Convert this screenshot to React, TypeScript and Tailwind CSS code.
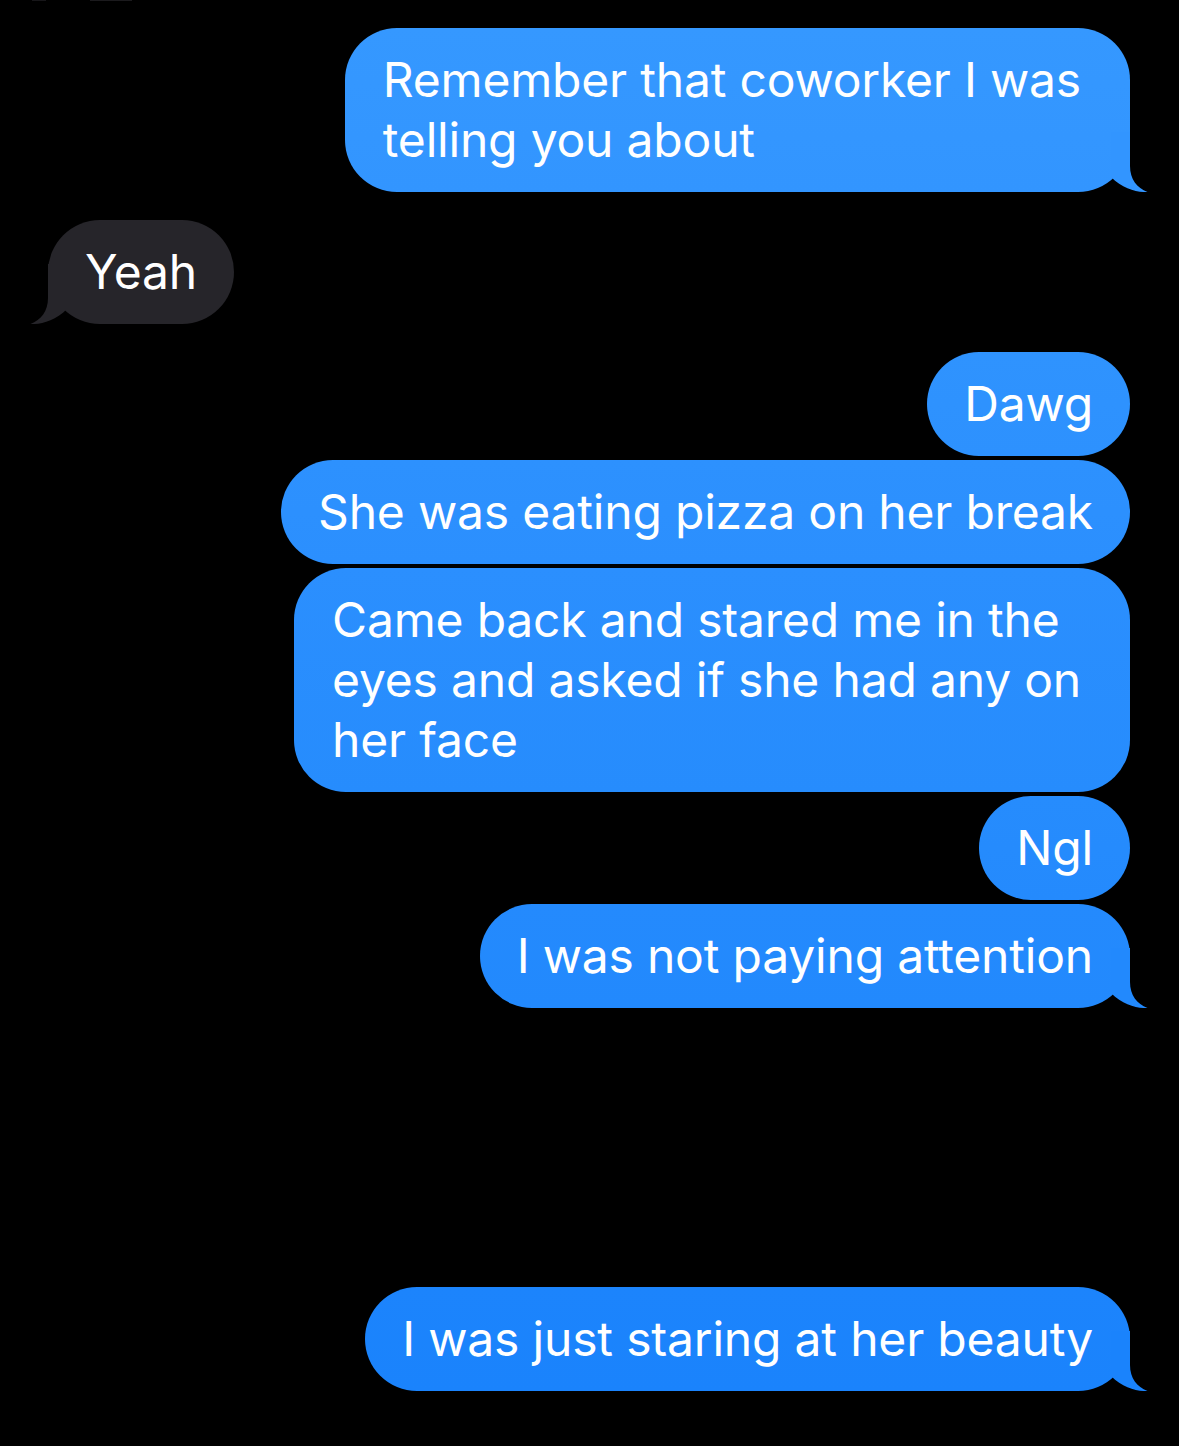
import React from 'react'

type BubbleProps = {
  lines: string[]
  sent?: boolean
  tail?: boolean
  bg: string
  tailFill?: string
  className?: string
}

function Tail({ fill, sent }: { fill: string; sent: boolean }) {
  return (
    <svg
      width="48"
      height="60"
      viewBox="0 0 48 60"
      className={
        sent
          ? 'absolute -right-[18px] bottom-0'
          : 'absolute -left-[18px] bottom-0 -scale-x-100'
      }
    >
      <path
        d="M30 0 L30 34 C30 47 37 56 47.5 60 C37 60.5 23 57 11 45 L11 0 Z"
        fill={fill}
      />
    </svg>
  )
}

function Bubble({ lines, sent = true, tail, bg, tailFill, className }: BubbleProps) {
  return (
    <div
      className={`relative w-fit py-[22px] rounded-[52px] text-white text-[48px] leading-[60px] tracking-[-0.004em] whitespace-nowrap ${bg} ${
        sent ? 'self-end' : 'self-start'
      } ${className ?? 'px-[37px]'}`}
    >
      {tail && <Tail fill={tailFill ?? '#26252a'} sent={sent} />}
      <p className="relative">
        {lines.map((l, i) => (
          <React.Fragment key={i}>
            {l}
            {i < lines.length - 1 && <br />}
          </React.Fragment>
        ))}
      </p>
    </div>
  )
}

export default function App() {
  return (
    <div
      className="w-full h-[1446px] bg-black overflow-hidden flex flex-col pl-12 pr-[49px] relative"
      style={{ fontFamily: 'Inter, "Noto Sans", sans-serif' }}
    >
      {/* bottom edge of the previous bubble peeking in */}
      <div className="absolute top-0 left-[32px] w-[14px] h-px bg-[#26252a]/60" />
      <div className="absolute top-0 left-[90px] w-[42px] h-px bg-[#26252a]/70" />

      <div className="flex flex-col pt-[28px]">
        <Bubble
          lines={['Remember that coworker I was', 'telling you about']}
          tail
          bg="bg-[linear-gradient(#3598ff,#3295ff)]"
          tailFill="#3295ff"
          className="pl-[38px] pr-[49px]"
        />

        <Bubble
          lines={['Yeah']}
          sent={false}
          tail
          bg="bg-[#26252a]"
          className="mt-7 px-[37px]"
        />

        <div className="flex flex-col gap-1 mt-7">
          <Bubble lines={['Dawg']} bg="bg-[linear-gradient(#2f93fe,#2d91fe)]" />
          <Bubble
            lines={['She was eating pizza on her break']}
            bg="bg-[linear-gradient(#2d91fe,#2b8ffe)]"
          />
          <Bubble
            lines={['Came back and stared me in the', 'eyes and asked if she had any on', 'her face']}
            bg="bg-[linear-gradient(#2b8ffe,#268cfd)]"
            className="pl-[38px] pr-[49px]"
          />
          <Bubble lines={['Ngl']} bg="bg-[linear-gradient(#268cfd,#248afd)]" />
          <Bubble
            lines={['I was not paying attention']}
            tail
            bg="bg-[linear-gradient(#248afd,#2289fd)]"
            tailFill="#2289fd"
          />
        </div>

        <Bubble
          lines={['I was just staring at her beauty']}
          tail
          bg="bg-[linear-gradient(#1c84fc,#1a83fc)]"
          tailFill="#1a83fc"
          className="mt-[279px] px-[37px]"
        />
      </div>
    </div>
  )
}
